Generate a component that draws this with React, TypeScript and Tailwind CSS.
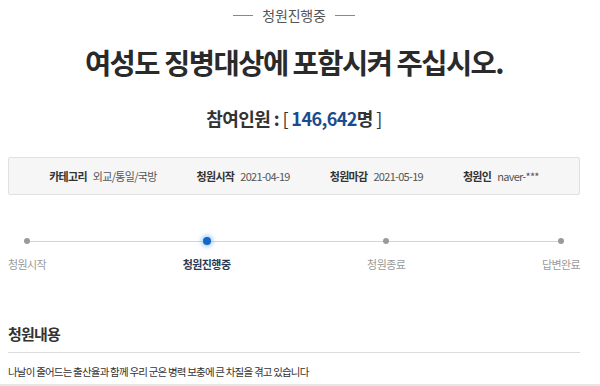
import React from "react";

const steps = [
  { label: "청원시작", active: false },
  { label: "청원진행중", active: true },
  { label: "청원종료", active: false },
  { label: "답변완료", active: false },
];

const info = [
  { k: "카테고리", v: "외교/통일/국방" },
  { k: "청원시작", v: "2021-04-19" },
  { k: "청원마감", v: "2021-05-19" },
  { k: "청원인", v: "naver-***" },
];

export default function App() {
  return (
    <div className="w-[600px] h-[386px] overflow-hidden bg-white font-['Noto_Sans_CJK_KR','Noto_Sans',sans-serif] text-[#333]">
      <div className="pl-2 pr-5">
        <div className="h-[30px] flex items-center justify-center gap-[9px]">
          <div className="w-[20px] h-px bg-[#888]" />
          <span className="text-[14px] leading-none tracking-[-0.2px] text-[#555]">청원진행중</span>
          <div className="w-[20px] h-px bg-[#888]" />
        </div>
        <div className="h-[64px] flex items-center justify-center">
          <h1 className="text-[28.5px] leading-none font-bold tracking-[-1.5px] text-[#2a2a2a]">
            여성도 징병대상에 포함시켜 주십시오.
          </h1>
        </div>
        <div className="h-[48px] flex items-center justify-center">
          <p className="text-[18px] leading-none font-bold tracking-[-0.6px] text-[#333]">
            참여인원 : <span className="font-normal">[</span>{" "}
            <span className="text-[#1b4b8f]">146,642</span>명{" "}
            <span className="font-normal">]</span>
          </p>
        </div>
        <div className="mt-[15px] h-[38px] bg-[#f6f6f6] border border-[#e0e0e0] rounded-[2px] flex items-center justify-center gap-[40px]">
          {info.map((it) => (
            <div key={it.k} className="flex items-center gap-[6px] text-[11px] leading-none tracking-[-0.7px]">
              <span className="font-bold text-[#333]">{it.k}</span>
              <span className="text-[#555]">{it.v}</span>
            </div>
          ))}
        </div>
        <div className="relative mt-[42px] flex justify-between">
          <div className="absolute left-[19px] right-[18px] top-[4px] h-px bg-[#d4d4d4]" />
          {steps.map((s) => (
            <div key={s.label} className="relative flex flex-col items-center">
              <div className="h-[8px] flex items-center justify-center">
                {s.active ? (
                  <div className="w-[8px] h-[8px] rounded-full bg-[#1666c5] shadow-[0_0_4px_2px_rgba(70,150,240,0.45)]" />
                ) : (
                  <div className="w-[6px] h-[6px] rounded-full bg-[#9a9a9a]" />
                )}
              </div>
              <span
                className={
                  s.active
                    ? "mt-[12px] text-[11px] leading-[14px] tracking-[-0.6px] font-bold text-[#2a3a55]"
                    : "mt-[12px] text-[11px] leading-[14px] tracking-[-0.6px] text-[#9a9a9a]"
                }
              >
                {s.label}
              </span>
            </div>
          ))}
        </div>
        <div className="mt-[53px] pb-[8px] border-b border-[#dcdcdc]">
          <h2 className="text-[15px] leading-[20px] font-bold tracking-[-0.8px] text-[#333]">청원내용</h2>
        </div>
        <p className="mt-[12px] text-[10.5px] leading-[14px] tracking-[-0.8px] text-[#333]">
          나날이 줄어드는 출산율과 함께 우리 군은 병력 보충에 큰 차질을 겪고 있습니다
        </p>
      </div>
      <div className="mt-[5px] border-t-2 border-[#e6e6e6]" />
    </div>
  );
}
